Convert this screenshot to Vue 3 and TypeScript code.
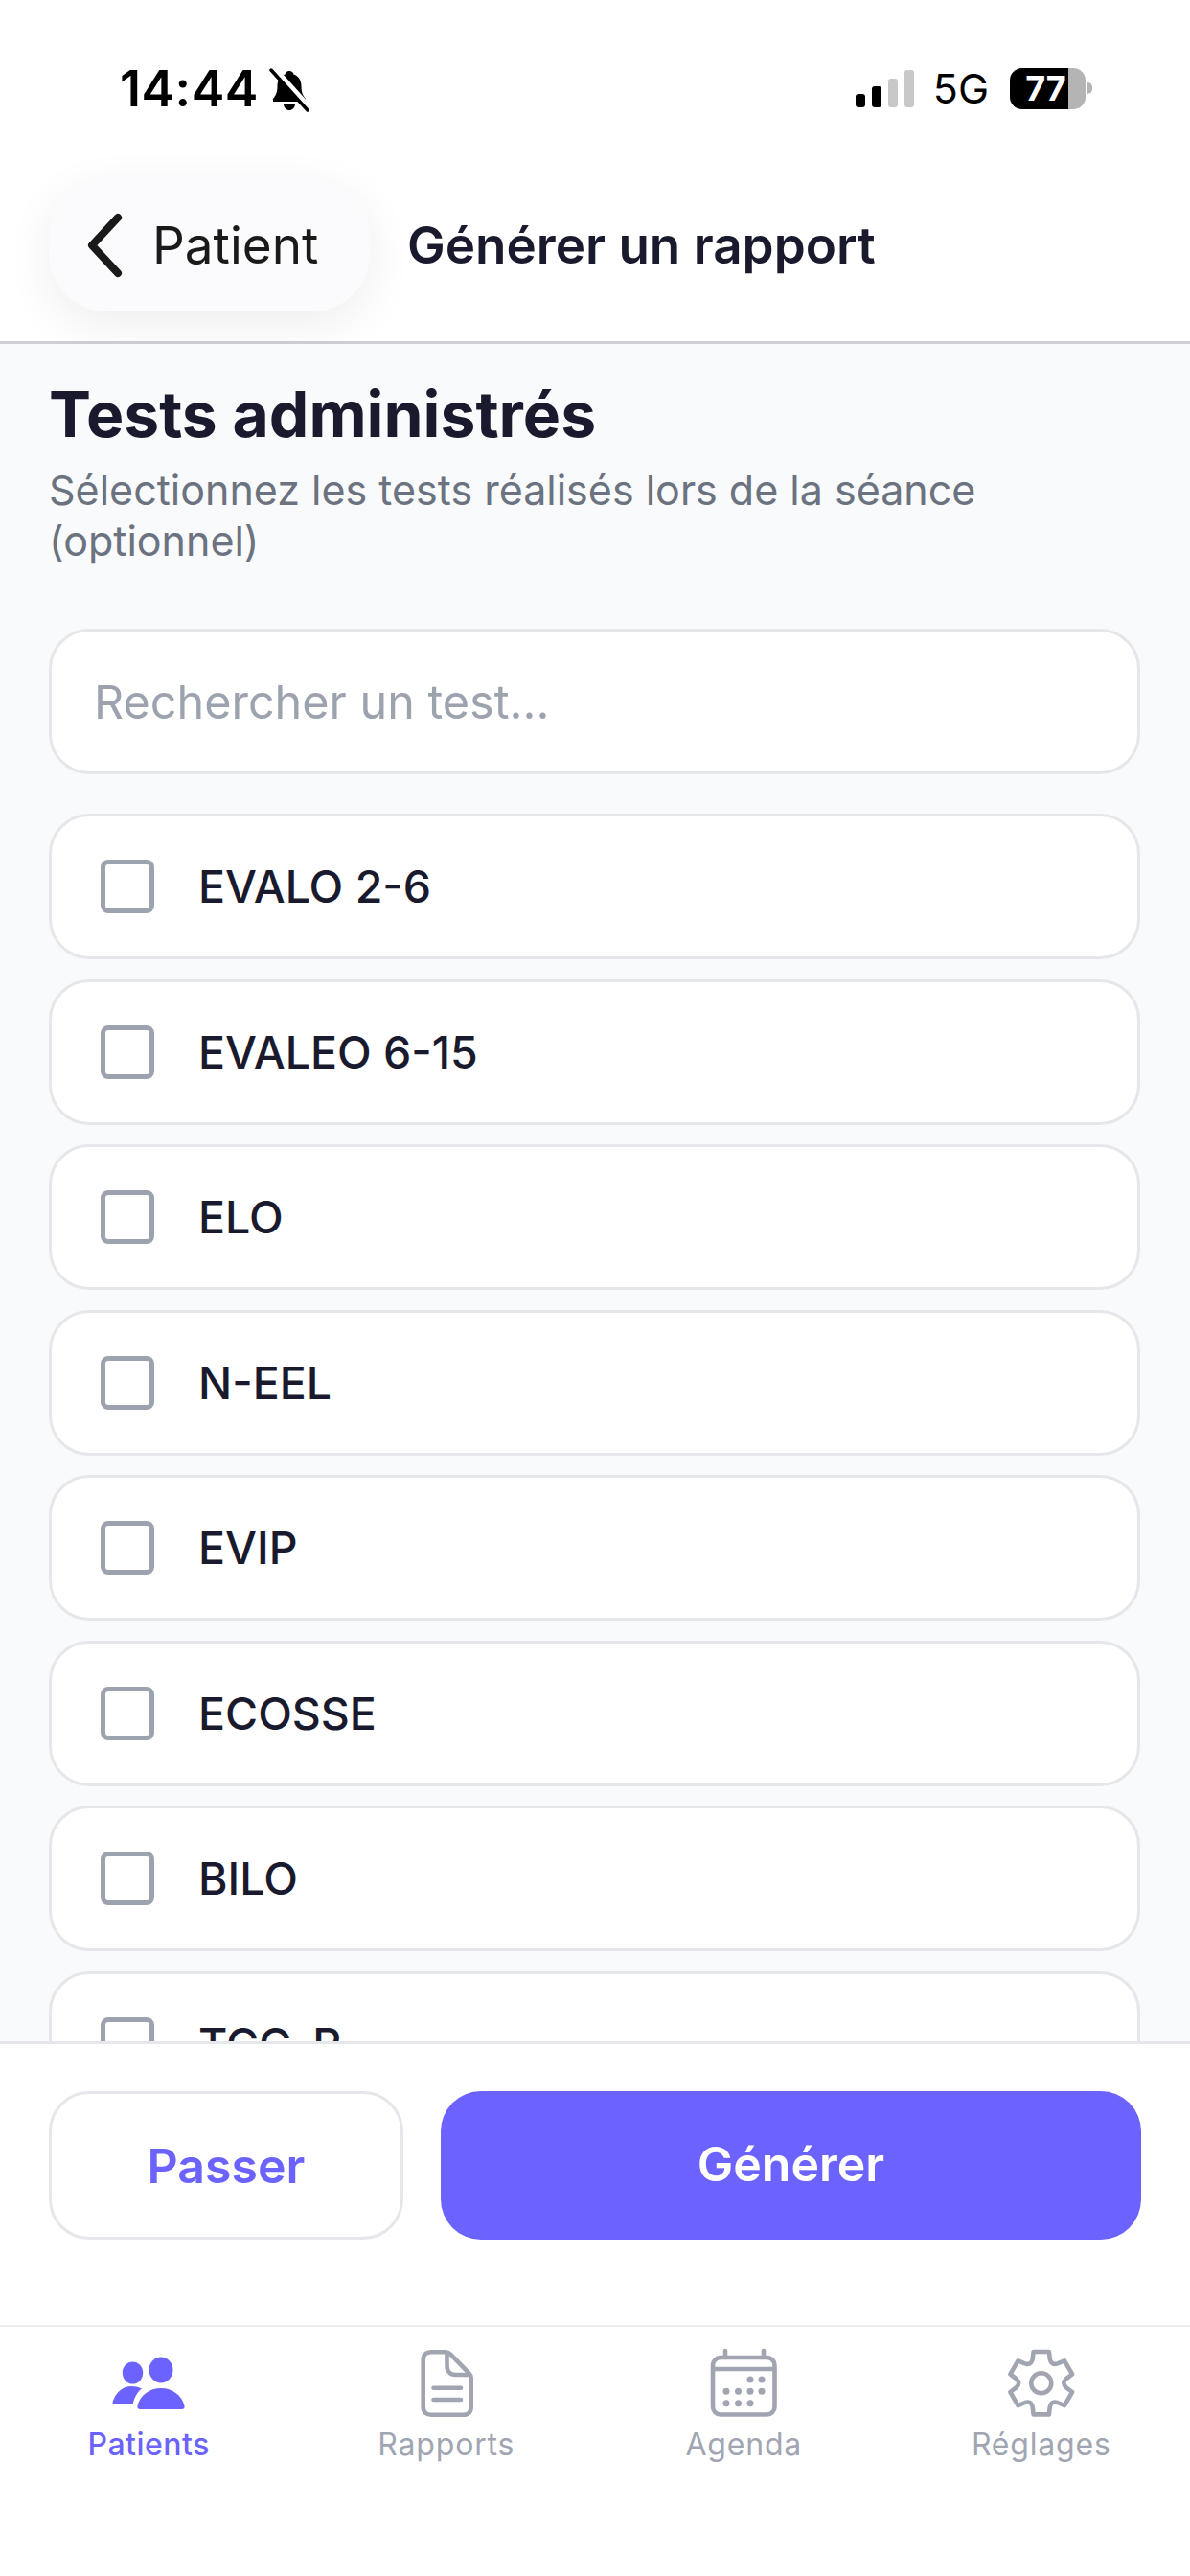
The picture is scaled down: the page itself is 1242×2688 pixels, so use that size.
<template>
  <div class="screen">
    <div class="status-bar">
      <div class="status-left">
        <span class="time">14:44</span>
        <svg class="bell" width="42" height="46" viewBox="0 0 42 46">
          <path d="M21 3c2.500 0 4 1.500 4.500 3.500C31 8.500 33.500 13 33.500 19c0 6 1.500 9.500 4.500 13v3H4v-3c3-3.500 4.500-7 4.500-13C8.500 13 11 8.500 16.500 6.500 17 4.500 18.500 3 21 3z" fill="#000" />
          <path d="M15 38h12c-.5 3.500-3 6-6 6s-5.500-2.500-6-6z" fill="#000" />
          <path d="M3 -1L41 41" stroke="#fff" stroke-width="7" />
          <path d="M2 2L40 44" stroke="#000" stroke-width="3.500" stroke-linecap="round" />
        </svg>
      </div>
      <div class="status-right">
        <div class="signal">
          <i class="bar on b1"></i>
          <i class="bar on b2"></i>
          <i class="bar b3"></i>
          <i class="bar b4"></i>
        </div>
        <span class="network">5G</span>
        <div class="battery">
          <div class="battery-body">
            <div class="battery-fill" :style="{ width: batteryLevel + '%' }"></div>
            <span class="battery-text">{{ batteryLevel }}</span>
          </div>
          <i class="battery-nub"></i>
        </div>
      </div>
    </div>

    <header class="header">
      <div class="back-pill">
        <svg width="46" height="70" viewBox="0 0 46 70">
          <path d="M36 6L9 35l27 29" fill="none" stroke="#1a1a1a" stroke-width="8" stroke-linecap="round" stroke-linejoin="round" />
        </svg>
        <span>Patient</span>
      </div>
      <h2 class="header-title">Générer un rapport</h2>
    </header>

    <main class="content">
      <h1 class="title">Tests administrés</h1>
      <p class="subtitle">Sélectionnez les tests réalisés lors de la séance (optionnel)</p>

      <input class="search" type="text" placeholder="Rechercher un test..." />

      <div class="test-list">
        <div v-for="test in tests" :key="test" class="test-row">
          <span class="checkbox"></span>
          <span class="test-name">{{ test }}</span>
        </div>
      </div>
    </main>

    <div class="actions">
      <button class="btn btn-skip">Passer</button>
      <button class="btn btn-generate">Générer</button>
    </div>

    <nav class="tabbar">
      <div class="tab active">
        <svg class="tab-icon" viewBox="0 0 84 84">
          <ellipse cx="55" cy="28" rx="12.500" ry="13.500" fill="#6c63ff" />
          <ellipse cx="25.500" cy="31" rx="10.700" ry="11.500" fill="#6c63ff" />
          <path d="M33.500 69c-2.500 0-3.500-1.500-3-3.500C33 54.500 43 47 55 47s22 7.500 24.500 18.500c.5 2-.5 3.500-3 3.500z" fill="#6c63ff" />
          <path d="M7 64c-2 0-3-1.300-2.300-3C8 51 15.500 45 24 45c4 0 7.500.8 11 2.500-4.500 3.500-7.500 8-9.500 16.500z" fill="#6c63ff" />
        </svg>
        <span>Patients</span>
      </div>
      <div class="tab">
        <svg class="tab-icon" viewBox="0 0 84 84">
          <path d="M26 9.200h15c2 0 3.500.7 5 2.200l19.500 20c1.500 1.500 2.200 3 2.200 5v30c0 5.500-3 8.400-8 8.400H26c-5 0-8.300-2.900-8.300-8.400V17.600c0-5.500 3.300-8.400 8.300-8.400z" fill="none" stroke="#a1a5b2" stroke-width="4.600" />
          <path d="M42.500 9.500v14c0 6 3.500 9.500 9 9.500h15.500" fill="none" stroke="#a1a5b2" stroke-width="4.600" />
          <path d="M28.500 46.700h28.500M28.500 59h28.500" fill="none" stroke="#a1a5b2" stroke-width="4.600" stroke-linecap="round" />
        </svg>
        <span>Rapports</span>
      </div>
      <div class="tab">
        <svg class="tab-icon" viewBox="0 0 84 84">
          <rect x="10" y="15" width="64.500" height="59.500" rx="8" fill="none" stroke="#a1a5b2" stroke-width="4.600" />
          <path d="M10 27h64.500" stroke="#a1a5b2" stroke-width="4.600" />
          <path d="M23 8v6M63 8v6" stroke="#a1a5b2" stroke-width="4.600" stroke-linecap="round" />
          <circle v-for="dot in calendarDots" :key="dot.x + '-' + dot.y" :cx="dot.x" :cy="dot.y" r="3.500" fill="#a1a5b2" />
        </svg>
        <span>Agenda</span>
      </div>
      <div class="tab">
        <svg class="tab-icon" viewBox="0 0 84 84">
          <path :d="gearPath" fill="none" stroke="#a1a5b2" stroke-width="4.600" stroke-linejoin="round" />
          <circle cx="41.750" cy="41.700" r="10.500" fill="none" stroke="#a1a5b2" stroke-width="4.600" />
        </svg>
        <span>Réglages</span>
      </div>
    </nav>
  </div>
</template>

<script setup lang="ts">
const tests: string[] = ['EVALO 2-6', 'EVALEO 6-15', 'ELO', 'N-EEL', 'EVIP', 'ECOSSE', 'BILO', 'TCG-R']

const batteryLevel = 77

const calendarDots = [
  { x: 49, y: 38 },
  { x: 61, y: 38 },
  { x: 24, y: 50.3 },
  { x: 36.5, y: 50.3 },
  { x: 49, y: 50.3 },
  { x: 61, y: 50.3 },
  { x: 24, y: 62.7 },
  { x: 36.5, y: 62.7 },
  { x: 49, y: 62.7 },
]

function polar(deg: number, r: number): string {
  const a = ((deg - 90) * Math.PI) / 180
  return (41.75 + r * Math.cos(a)).toFixed(2) + ' ' + (41.7 + r * Math.sin(a)).toFixed(2)
}

// six teeth, curved valleys between them
function buildGear(): string {
  let d = ''
  for (let i = 0; i < 6; i++) {
    const a = i * 60
    d += (i === 0 ? 'M' : 'L') + polar(a - 14, 33.7)
    d += 'L' + polar(a + 14, 33.7)
    d += 'L' + polar(a + 20, 26.5)
    d += 'Q' + polar(a + 30, 21) + ' ' + polar(a + 40, 26.5)
  }
  return d + 'Z'
}

const gearPath = buildGear()
</script>

<style scoped>
.screen {
  width: 1242px;
  height: 2688px;
  display: flex;
  flex-direction: column;
  overflow: hidden;
  background: #fff;
  font-family: Inter, "Liberation Sans", sans-serif;
  color: #1a1a2e;
}

.status-bar {
  height: 186px;
  flex-shrink: 0;
  box-sizing: border-box;
  padding: 65px 102px 0 125px;
  display: flex;
  justify-content: space-between;
  align-items: flex-start;
}

.status-left {
  display: flex;
  align-items: center;
  gap: 14px;
}

.time {
  font-size: 52px;
  line-height: 56px;
  font-weight: 600;
  letter-spacing: 0.5px;
  color: #000;
}

.bell {
  margin-top: 1px;
  margin-left: -3px;
}

.status-right {
  display: flex;
  align-items: center;
  gap: 20px;
  margin-top: 5px;
}

.signal {
  display: flex;
  align-items: flex-end;
  gap: 7px;
  height: 39px;
  margin-top: 1px;
}

.bar {
  display: block;
  width: 10px;
  border-radius: 3px;
  background: #c8c8c8;
}

.bar.on {
  background: #000;
}

.b1 { height: 14px; }
.b2 { height: 22px; }
.b3 { height: 30px; }
.b4 { height: 39px; }

.network {
  margin-right: 2px;
  font-size: 43px;
  line-height: 44px;
  color: #000;
}

.battery {
  display: flex;
  align-items: center;
  gap: 2px;
}

.battery-body {
  position: relative;
  width: 79px;
  height: 43px;
  border-radius: 13px;
  overflow: hidden;
  background: #b4b4b4;
}

.battery-fill {
  height: 100%;
  background: #000;
}

.battery-text {
  position: absolute;
  left: 0;
  right: 4px;
  top: 0;
  text-align: center;
  font-size: 36px;
  line-height: 43px;
  font-weight: 700;
  color: #fff;
}

.battery-nub {
  display: block;
  width: 5px;
  height: 12px;
  border-radius: 0 6px 6px 0;
  background: #b4b4b4;
}

.header {
  flex-shrink: 0;
  box-sizing: border-box;
  height: 173px;
  padding: 0 51px;
  display: flex;
  align-items: flex-start;
  gap: 39px;
  background: #fff;
  border-bottom: 3px solid #d0d0d4;
}

.back-pill {
  width: 335px;
  height: 139px;
  box-sizing: border-box;
  padding-left: 36px;
  display: flex;
  align-items: center;
  gap: 26px;
  border-radius: 60px;
  background: #fbfbfd;
  box-shadow: 0 14px 50px rgba(0, 0, 0, 0.07);
  font-size: 53px;
  color: #1a1a1a;
}

.header-title {
  margin: 0;
  font-size: 53px;
  line-height: 141px;
  font-weight: 600;
  color: #1a1a2e;
}

.content {
  flex: 1;
  min-height: 0;
  overflow: hidden;
  box-sizing: border-box;
  padding: 33px 52px 0 51px;
  background: #f9fafb;
}

.title {
  margin: 0;
  font-size: 66px;
  line-height: 80px;
  font-weight: 700;
  color: #1a1a2e;
}

.subtitle {
  margin: 13px 0 0;
  width: 1000px;
  font-size: 43px;
  line-height: 53px;
  color: #6b7280;
}

.search {
  display: block;
  width: 100%;
  height: 152px;
  box-sizing: border-box;
  margin-top: 65px;
  padding: 0 44px;
  border: 3px solid #e5e7eb;
  border-radius: 42px;
  background: #fff;
  font-family: inherit;
  font-size: 48.500px;
  color: #1a1a2e;
  outline: none;
}

.search::placeholder {
  color: #9ca3af;
  opacity: 1;
}

.test-list {
  margin-top: 41px;
  display: flex;
  flex-direction: column;
  gap: 20.5px;
}

.test-row {
  height: 152px;
  flex-shrink: 0;
  box-sizing: border-box;
  padding-left: 51px;
  display: flex;
  align-items: center;
  gap: 46px;
  border: 3px solid #e5e7eb;
  border-radius: 42px;
  background: #fff;
}

.checkbox {
  width: 56px;
  height: 56px;
  box-sizing: border-box;
  border: 5px solid #9ca3af;
  border-radius: 8px;
}

.test-name {
  font-size: 46.500px;
  font-weight: 500;
  color: #1a1a2e;
}

.actions {
  flex-shrink: 0;
  height: 296px;
  box-sizing: border-box;
  padding: 49px 51px 0;
  display: flex;
  align-items: flex-start;
  gap: 39px;
  background: #fff;
  border-top: 3px solid #e5e7eb;
}

.btn {
  height: 155px;
  box-sizing: border-box;
  border-radius: 42px;
  font-family: inherit;
  font-size: 50px;
  font-weight: 600;
}

.btn-skip {
  width: 370px;
  border: 3px solid #e5e7eb;
  background: #fff;
  color: #6c63ff;
}

.btn-generate {
  flex: 1;
  border: none;
  padding-bottom: 4px;
  background: #6c63ff;
  color: #fff;
}

.tabbar {
  flex-shrink: 0;
  height: 262px;
  box-sizing: border-box;
  padding-top: 17px;
  display: grid;
  grid-template-columns: repeat(4, 1fr);
  align-items: start;
  background: #fff;
  border-top: 2px solid #eeeef1;
}

.tab {
  display: flex;
  flex-direction: column;
  align-items: center;
  font-size: 32px;
  line-height: 40px;
  font-weight: 400;
  letter-spacing: 0.8px;
  color: #a1a5b2;
}

.tab.active {
  font-weight: 500;
  letter-spacing: 0.5px;
  color: #6c63ff;
}

.tab-icon {
  display: block;
  width: 84px;
  height: 84px;
  margin-bottom: 2px;
}
</style>
